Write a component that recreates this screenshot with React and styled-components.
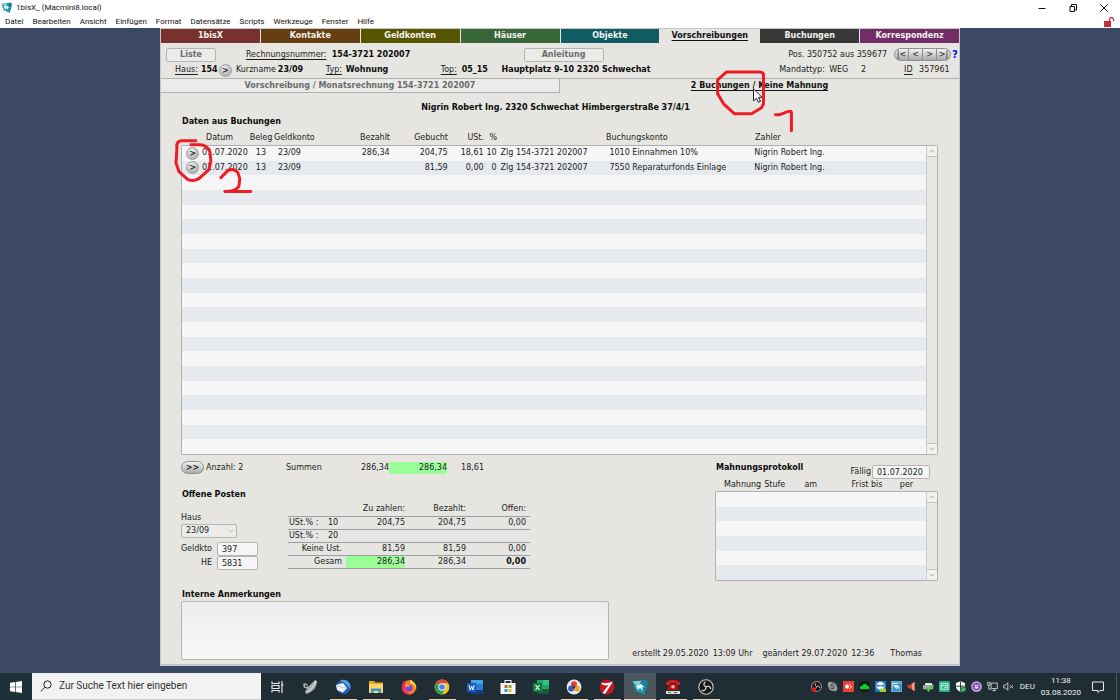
import React from "react";
import styled, { createGlobalStyle } from "styled-components";

const menuItems = [
  "Datei",
  "Bearbeiten",
  "Ansicht",
  "Einfügen",
  "Format",
  "Datensätze",
  "Scripts",
  "Werkzeuge",
  "Fenster",
  "Hilfe",
];

const modules = [
  { name: "1bisX", color: "#78312e" },
  { name: "Kontakte", color: "#653f12" },
  { name: "Geldkonten", color: "#575600" },
  { name: "Häuser", color: "#376638" },
  { name: "Objekte", color: "#115c63" },
  { name: "Vorschreibungen", active: true },
  { name: "Buchungen", color: "#373737" },
  { name: "Korrespondenz", color: "#722d66" },
];

const bookings = [
  {
    datum: "01.07.2020",
    beleg: "13",
    geldkonto: "23/09",
    bezahlt: "286,34",
    gebucht: "204,75",
    ust: "18,61",
    prozent: "10",
    text: "Zlg 154-3721 202007",
    konto: "1010 Einnahmen 10%",
    zahler: "Nigrin Robert Ing.",
  },
  {
    datum: "01.07.2020",
    beleg: "13",
    geldkonto: "23/09",
    bezahlt: "",
    gebucht: "81,59",
    ust: "0,00",
    prozent: "0",
    text: "Zlg 154-3721 202007",
    konto: "7550 Reparaturfonds Einlage",
    zahler: "Nigrin Robert Ing.",
  },
];

const openItems = [
  { label: "USt.% :", rate: "10", due: "204,75", paid: "204,75", open: "0,00" },
  { label: "USt.% :", rate: "20", due: "", paid: "", open: "" },
  { label: "Keine Ust.", due: "81,59", paid: "81,59", open: "0,00" },
  { label: "Gesam", due: "286,34", paid: "286,34", open: "0,00", total: true },
];

const BOOKING_ROWS = 21;
const REMINDER_ROWS = 6;

function AppLogo() {
  return (
    <svg viewBox="0 0 16 16" aria-hidden="true">
      <path d="M0.500 2.500 L15 1 L15.500 5 L12.500 15.500 L4 12 Z" fill="#1f9bb0" />
      <path d="M0.500 2.500 L9 1.700 L6 8 Z" fill="#7fd3dd" />
      <path d="M9 1.700 L15 1 L15.500 5 L12.500 15.500 L10 9 Z" fill="#1583a0" />
      <path d="M4 7 L9 5 L13 8.500 L10 8 L11 12 L8 9 L6 11 Z" fill="#e4f7fa" />
    </svg>
  );
}

function Obs({ live }) {
  return (
    <svg viewBox="0 0 16 16" aria-hidden="true">
      <circle cx="8" cy="8" r="7.2" fill="#151517" stroke="#c9c9c9" strokeWidth="1.1" />
      <path
        d="M8 8 C5.5 7 5.2 4 7.5 3 M8 8 C10.5 6 13 8 12.6 10.2 M8 8 C8.3 11 5.3 12.6 3.6 11"
        fill="none"
        stroke="#c9c9c9"
        strokeWidth="1.4"
      />
      {live && <circle cx="4" cy="12.5" r="3.4" fill="#e31818" />}
    </svg>
  );
}

const taskIcons = [
  {
    name: "Taskansicht",
    art: (
      <svg viewBox="0 0 16 16" fill="none" stroke="#e4e6e8" strokeWidth="1.2">
        <path d="M3 2.5v2h7v-2M3 13.5v-2h7v2M3 6.5h7v3H3zM13 2v12M12 6h2.5" />
      </svg>
    ),
  },
  {
    name: "Gimp",
    art: (
      <svg viewBox="0 0 16 16">
        <path d="M1 5 C4 3 6 5 6 8 L13 1 L15 2 C15 7 12 13 4 15 L3 12 C6 11 5 9 2 9 Z" fill="#a9adaf" />
        <path d="M5 13 C9 11 12 7 14 2" stroke="#e6e8e9" fill="none" />
        <circle cx="4" cy="7" r="1" fill="#20282d" />
      </svg>
    ),
  },
  {
    name: "Thunderbird",
    open: true,
    art: (
      <svg viewBox="0 0 16 16">
        <circle cx="8.5" cy="8" r="7.2" fill="#1e5fb4" />
        <path d="M5 1.5 C11 -1 17 4 15 10 C13 7 10 3 5 1.5 Z" fill="#55a2e8" />
        <path d="M1 6 L8 4 L12 9 L8 13.5 L2 11 Z" fill="#f3f4f7" />
        <path d="M1 6 L7 8.5 L12 9" fill="none" stroke="#b8c2d1" />
      </svg>
    ),
  },
  {
    name: "Explorer",
    open: true,
    art: (
      <svg viewBox="0 0 16 16">
        <path d="M1 2h5l1.5 1.5H15V14H1z" fill="#e8a91c" />
        <path d="M1 5h14v9H1z" fill="#fbd463" />
        <path d="M3 14V9.5h10V14h-2.5v-2h-5v2z" fill="#3a95d6" />
      </svg>
    ),
  },
  {
    name: "Firefox",
    art: (
      <svg viewBox="0 0 16 16">
        <circle cx="8" cy="8.5" r="7.2" fill="#ff7a22" />
        <path d="M9 0.5 C14 3 16 7 15 11 C14 6 12 5 9 5 Z" fill="#ffd13a" />
        <path d="M1 6 L2.5 2 L5 4 C2 8 5 15 11 15 C4 17 0 11 1 6z" fill="#f0266d" />
        <circle cx="8" cy="9" r="3.4" fill="#7a42d8" />
        <path d="M3.5 6 C6 5 8 6 9.5 7 L6 8 z" fill="#ffb52c" />
      </svg>
    ),
  },
  {
    name: "Chrome",
    open: true,
    art: (
      <svg viewBox="0 0 16 16">
        <circle cx="8" cy="8" r="7.4" fill="#f7c525" />
        <path d="M8 8 L1.6 4.3 A7.4 7.4 0 0 1 14.4 4.3 L8 4.3 Z" fill="#dc4638" />
        <path d="M8 8 L1.6 4.3 A7.4 7.4 0 0 0 8 15.4 L11.2 9.8 Z" fill="#2f9f53" />
        <circle cx="8" cy="8" r="3.7" fill="#f5f5f5" />
        <circle cx="8" cy="8" r="2.8" fill="#4383e8" />
      </svg>
    ),
  },
  {
    name: "Word",
    art: (
      <svg viewBox="0 0 16 16">
        <path d="M4 1h12v14H4z" fill="#2b7cd3" />
        <path d="M4 1h12v4H4z" fill="#41a5ee" />
        <path d="M4 11h12v4H4z" fill="#123f83" />
        <path d="M0 4h9v9H0z" fill="#185abd" />
        <path d="M2 6l1.3 5L4.6 7l1.3 4 1.3-5" fill="none" stroke="#fff" />
      </svg>
    ),
  },
  {
    name: "Store",
    art: (
      <svg viewBox="0 0 16 16">
        <path d="M5 5V1.5h6V5" fill="none" stroke="#eee" strokeWidth="1.2" />
        <path d="M0.5 4h15v11h-15z" fill="#f5f5f5" />
        <path d="M4.5 6h3v3h-3z" fill="#e75429" />
        <path d="M8.5 6h3v3h-3z" fill="#74b52c" />
        <path d="M4.5 10h3v3h-3z" fill="#239ddd" />
        <path d="M8.5 10h3v3h-3z" fill="#f7b71e" />
      </svg>
    ),
  },
  {
    name: "Excel",
    art: (
      <svg viewBox="0 0 16 16">
        <path d="M4 1h12v14H4z" fill="#21a366" />
        <path d="M10 1h6v5h-6z" fill="#33c481" />
        <path d="M4 10h12v5H4z" fill="#185c37" />
        <path d="M0 4h9v9H0z" fill="#107c41" />
        <path d="M2.5 6l4 5M6.5 6l-4 5" stroke="#fff" strokeWidth="1.2" />
      </svg>
    ),
  },
  {
    name: "Fotos",
    open: true,
    art: (
      <svg viewBox="0 0 16 16">
        <circle cx="8" cy="8" r="7.4" fill="#e6e8ec" />
        <circle cx="8" cy="5.2" r="3" fill="#df3f33" />
        <circle cx="5.2" cy="9.4" r="3" fill="#3560b0" />
        <circle cx="10.8" cy="9.4" r="3" fill="#eba523" />
        <circle cx="8" cy="8" r="1.4" fill="#3b3b50" />
      </svg>
    ),
  },
  {
    name: "Bankprogramm",
    open: true,
    art: (
      <svg viewBox="0 0 16 16">
        <circle cx="8" cy="8" r="7.4" fill="#c4161c" />
        <path d="M2 3.500 C6 5 10 4 14 2.500 L6 15 L3.500 14 L9.500 6 C6 7 3 6 2 3.500z" fill="#fff" />
      </svg>
    ),
  },
  { name: "1bisX", current: true, art: <AppLogo /> },
  {
    name: "Telefon",
    open: true,
    art: (
      <svg viewBox="0 0 16 16">
        <path d="M1 4 C2 0 14 0 15 4 V6 H11 V4 H5 V6 H1z" fill="#df1919" />
        <path d="M5 5h6l3 6H2z" fill="#b80f0f" />
        <circle cx="8" cy="7.8" r="1.8" fill="#f2b7b0" />
        <path d="M1 12h14v3H1z" fill="#d9dbd8" />
        <path d="M3 13h3v1H3z" fill="#3f9a43" />
        <path d="M9 13h3v1H9z" fill="#666" />
      </svg>
    ),
  },
  { name: "OBS", open: true, art: <Obs /> },
];

const trayIcons = [
  { name: "OBS Aufnahme", art: <Obs live /> },
  {
    name: "Skype",
    art: (
      <svg viewBox="0 0 16 16">
        <circle cx="8" cy="8" r="6" fill="#969a9c" />
        <circle cx="5" cy="5" r="4" fill="#969a9c" />
        <circle cx="11" cy="11" r="4" fill="#969a9c" />
        <path d="M10.5 5.8 C9 4 5.5 4.6 6 6.6 C6.4 8.4 10.4 7.6 10.4 9.7 C10.3 11.6 6.7 11.6 5.4 9.9" fill="none" stroke="#2a3238" strokeWidth="1.4" />
      </svg>
    ),
  },
  {
    name: "AnyDesk",
    art: (
      <svg viewBox="0 0 16 16">
        <path d="M0 0h16v16H0z" fill="#ef4136" />
        <path d="M6 4.5L9.5 8 6 11.5 2.5 8z" fill="#fff" />
        <path d="M9 4.5L12.5 8 9 11.5" fill="none" stroke="#fff" strokeWidth="1.3" />
      </svg>
    ),
  },
  {
    name: "Cloud",
    art: (
      <svg viewBox="0 0 16 16">
        <circle cx="8" cy="8" r="8" fill="#0a150c" />
        <path d="M2 12 C0 8 3 6 5 7 C6 3 11 3 12 7 C15 7 16 10 14 12z" fill="#12cf2a" />
      </svg>
    ),
  },
  {
    name: "TeamViewer",
    art: (
      <svg viewBox="0 0 16 16">
        <path d="M0 0h16v16H0z" fill="#1b75d0" />
        <circle cx="8" cy="7" r="6" fill="#fff" />
        <path d="M2 7l3-2.5v1.7h6V4.5L14 7l-3 2.5V7.8H5v1.7z" fill="#1b75d0" />
        <path d="M7 11h9v5H7z" fill="#9bd22d" />
      </svg>
    ),
  },
  {
    name: "Netzwerkmonitor",
    art: (
      <svg viewBox="0 0 16 16">
        <path d="M0 0h16v16H0z" fill="#5ca9da" />
        <path d="M2 3h8v6H2z" fill="#cae6f6" />
        <path d="M4 5h10v8H4z" fill="none" stroke="#23699d" />
        <path d="M6 7l2 4 2-4 2 4" fill="none" stroke="#fff" />
      </svg>
    ),
  },
  {
    name: "Lautsprecher",
    art: (
      <svg viewBox="0 0 16 16">
        <path d="M1 5.5h4L11 1v14L5 10.5H1z" fill="#c4442b" />
        <path d="M7 4L11 1v14L7 12z" fill="#e99c83" />
      </svg>
    ),
  },
  {
    name: "Drucker",
    art: (
      <svg viewBox="0 0 16 16">
        <path d="M3 3h10v4H3z" fill="#eceeed" />
        <path d="M0 6h15v6H0z" fill="#a2aaa7" />
        <path d="M5 10l3 4 7-9" fill="none" stroke="#4fc33e" strokeWidth="2.5" />
      </svg>
    ),
  },
  {
    name: "Sicherung",
    art: (
      <svg viewBox="0 0 16 16">
        <rect width="16" height="16" rx="2" fill="#25b28b" />
        <path d="M3 4h10v8H3zM3 7h10M8 9.5h3" fill="none" stroke="#e9fbf5" strokeWidth="1.3" />
      </svg>
    ),
  },
  {
    name: "Sicherheit",
    art: (
      <svg viewBox="0 0 16 16">
        <path d="M8 0.5L14.5 3v5c0 4-3 6.5-6.5 7.5C4.5 14.5 1.5 12 1.5 8V3z" fill="#fff" />
        <path d="M8 1v14M2 7.5h12" stroke="#20282d" strokeWidth="1.3" />
        <circle cx="12" cy="12" r="4" fill="#199a43" />
        <path d="M10 12l1.5 1.5L14 10.5" fill="none" stroke="#fff" />
      </svg>
    ),
  },
  {
    name: "Viber",
    art: (
      <svg viewBox="0 0 16 16">
        <circle cx="8" cy="8" r="7.6" fill="#d9c6ea" />
        <circle cx="8" cy="8" r="5.8" fill="#8347b5" />
        <path d="M5 6h2v4h2V6h2M5 10h6" fill="none" stroke="#fff" strokeWidth="1.2" />
      </svg>
    ),
  },
  {
    name: "Netzwerk",
    art: (
      <svg viewBox="0 0 16 16" fill="none" stroke="#dfe2e4" strokeWidth="1.2">
        <path d="M6 3h9v8H6zM8 14h5M10.5 11v3M1 2h3.5v4H1zM2.7 6v6H6" />
      </svg>
    ),
  },
  {
    name: "Ton aus",
    art: (
      <svg viewBox="0 0 16 16" fill="none" stroke="#dfe2e4" strokeWidth="1.2">
        <path d="M1 6h2.5L7 2.5v11L3.5 10H1zM10 6l4.5 4.5M14.5 6L10 10.5" />
      </svg>
    ),
  },
];

function Scroll() {
  return (
    <ScrollBar>
      <ScrollArrow aria-label="Nach oben">
        <svg viewBox="0 0 10 10">
          <path d="M2 6.5L5 3.5 8 6.5" />
        </svg>
      </ScrollArrow>
      <ScrollArrow aria-label="Nach unten">
        <svg viewBox="0 0 10 10">
          <path d="M2 3.5L5 6.5 8 3.5" />
        </svg>
      </ScrollArrow>
    </ScrollBar>
  );
}

function BookingTable() {
  const rows = Array.from({ length: BOOKING_ROWS }, (_, i) => bookings[i]);
  return (
    <ListFrame>
      <Table>
        <thead>
          <BookingHead>
            <Th />
            <Th $indent>Datum</Th>
            <Th $align="center">Beleg</Th>
            <Th>Geldkonto</Th>
            <Th $align="right">Bezahlt</Th>
            <Th $align="right">Gebucht</Th>
            <Th $align="right">USt.</Th>
            <Th $align="right">%</Th>
            <Th />
            <Th>Buchungskonto</Th>
            <Th>Zahler</Th>
          </BookingHead>
        </thead>
        <StripedBody $rows={BOOKING_ROWS} $height={308}>
          {rows.map((b, i) => (
            <BookingRow key={i}>
              {b && (
                <>
                  <Td $indent>
                    <RoundButton aria-label="Buchung öffnen">&gt;</RoundButton>
                  </Td>
                  <Td>{b.datum}</Td>
                  <Td $align="center">{b.beleg}</Td>
                  <Td $indent>{b.geldkonto}</Td>
                  <Td $align="right">{b.bezahlt}</Td>
                  <Td $align="right">{b.gebucht}</Td>
                  <Td $align="right">{b.ust}</Td>
                  <Td $align="right">{b.prozent}</Td>
                  <Td $indent>{b.text}</Td>
                  <Td $indent>{b.konto}</Td>
                  <Td>{b.zahler}</Td>
                </>
              )}
            </BookingRow>
          ))}
        </StripedBody>
      </Table>
      <Scroll />
    </ListFrame>
  );
}

function OpenItems() {
  return (
    <OpenTable>
      <thead>
        <tr>
          <th />
          <th />
          <th>Zu zahlen:</th>
          <th>Bezahlt:</th>
          <th>Offen:</th>
        </tr>
      </thead>
      <tbody>
        {openItems.map((o, i) => (
          <tr key={i}>
            {o.rate ? (
              <>
                <LabelCell>{o.label}</LabelCell>
                <LabelCell>{o.rate}</LabelCell>
              </>
            ) : (
              <td colSpan={2}>{o.label}</td>
            )}
            <td>{o.total ? <Sum>{o.due}</Sum> : o.due}</td>
            <td>{o.paid}</td>
            <td>{o.total ? <b>{o.open}</b> : o.open}</td>
          </tr>
        ))}
      </tbody>
    </OpenTable>
  );
}

function Reminders() {
  return (
    <ReminderBox>
      <ReminderTop>
        <Heading>Mahnungsprotokoll</Heading>
        <DueField>
          <label htmlFor="faellig">Fällig</label>
          <Field id="faellig" defaultValue="01.07.2020" $width={58} />
        </DueField>
      </ReminderTop>
      <ListFrame>
        <Table>
          <thead>
            <ReminderHead>
              <Th>Mahnung</Th>
              <Th>Stufe</Th>
              <Th>am</Th>
              <Th>Frist bis</Th>
              <Th>per</Th>
            </ReminderHead>
          </thead>
          <StripedBody $rows={REMINDER_ROWS} $height={88}>
            {Array.from({ length: REMINDER_ROWS }, (_, i) => (
              <tr key={i}>
                <td />
              </tr>
            ))}
          </StripedBody>
        </Table>
        <Scroll />
      </ListFrame>
    </ReminderBox>
  );
}

function Annotations() {
  return (
    <Marks viewBox="0 0 800 638" aria-hidden="true">
      <g fill="none" stroke="#ee1c24" strokeWidth="3" strokeLinecap="round" strokeLinejoin="round">
        <path d="M599 43 H567 L558 51 V65 L564 75 L575 85 H592 L602 79 L604 75 V45 Q603 43 600 43" />
        <path d="M616 86 H620 L625 84 Q632 81 632 84 V102" />
        <path d="M35 112 H20 Q15 113 16 119 L15 134 L18 143 L27 151 Q33 153 38 150 L48 141 L50 132 L49 123 Q46 116 39 116 L30 116" />
        <path d="M60 149 L67 142 Q73 139 77 144 L79 150 L78 158 Q75 163 64 163 H90" />
      </g>
      <path d="M594 60 V72 L597 69.5 L599 73.5 L601 72.5 L599 68.5 H602.5 Z" fill="#fff" stroke="#222" strokeWidth="1" />
    </Marks>
  );
}

function App() {
  return (
    <>
      <GlobalStyle />
      <Desktop>
        <TitleBar>
          <Title>
            <Glyph $size={11}>
              <AppLogo />
            </Glyph>
            1bisX_ (Macmini8.local)
          </Title>
          <WindowButtons>
            <WindowButton aria-label="Minimieren">
              <svg viewBox="0 0 10 10">
                <path d="M1.5 5.5h7" />
              </svg>
            </WindowButton>
            <WindowButton aria-label="Wiederherstellen">
              <svg viewBox="0 0 10 10">
                <path d="M2 3.5h4.5V8.5H2zM3.5 3.5v-2h5v5.5h-2" />
              </svg>
            </WindowButton>
            <WindowButton aria-label="Schließen">
              <svg viewBox="0 0 10 10">
                <path d="M1.5 1.5l7 7M8.5 1.5l-7 7" />
              </svg>
            </WindowButton>
          </WindowButtons>
        </TitleBar>
        <MenuBar>
          {menuItems.map((m) => (
            <MenuItem key={m}>{m}</MenuItem>
          ))}
          <Lock viewBox="0 0 12 12">
            <path d="M1 5h7v6H1z" fill="#c62f43" />
            <path d="M6.5 5V3Q8.5 0 10.5 3v2" fill="none" stroke="#c62f43" strokeWidth="1.3" />
          </Lock>
        </MenuBar>

        <Workspace>
          <Form>
            <Tabs>
              {modules.map((m) => (
                <Tab key={m.name} href="#" $color={m.color} $active={m.active}>
                  {m.name}
                </Tab>
              ))}
            </Tabs>

            <Header>
              <HeaderRow $cols="80fr 86fr 192fr 80fr 185fr 106fr 57fr 8fr">
                <BoxButton>Liste</BoxButton>
                <u>Rechnungsnummer:</u>
                <b>154-3721 202007</b>
                <BoxButton $wide>Anleitung</BoxButton>
                <span />
                <span>Pos. 350752 aus 359677</span>
                <Pager>
                  <PagerButton>|&lt;</PagerButton>
                  <PagerButton>&lt;</PagerButton>
                  <PagerButton>&gt;</PagerButton>
                  <PagerButton>&gt;|</PagerButton>
                </Pager>
                <Help href="#">?</Help>
              </HeaderRow>
              <HeaderRow $inset $cols="26fr 18fr 17fr 42fr 48fr 20fr 95fr 21fr 40fr 278fr 50fr 32fr 43fr 15fr 40fr">
                <u>Haus:</u>
                <b>154</b>
                <RoundButton aria-label="Haus öffnen">&gt;</RoundButton>
                <span>Kurzname</span>
                <b>23/09</b>
                <u>Typ:</u>
                <b>Wohnung</b>
                <u>Top:</u>
                <b>05_15</b>
                <b>Hauptplatz 9-10 2320 Schwechat</b>
                <span>Mandattyp:</span>
                <span>WEG</span>
                <span>2</span>
                <u>ID</u>
                <span>357961</span>
              </HeaderRow>
            </Header>

            <Panels>
              <PanelTab href="#">Vorschreibung / Monatsrechnung 154-3721 202007</PanelTab>
              <PanelTab href="#" $active>
                2 Buchungen / Keine Mahnung
              </PanelTab>
            </Panels>

            <Content>
              <Address>Nigrin Robert Ing. 2320 Schwechat Himbergerstraße 37/4/1</Address>
              <Heading>Daten aus Buchungen</Heading>
              <BookingTable />

              <Lower>
                <div>
                  <Totals>
                    <PillButton>&gt;&gt;</PillButton>
                    <span>Anzahl: 2</span>
                    <span>Summen</span>
                    <Amount>286,34</Amount>
                    <Sum>286,34</Sum>
                    <Amount>18,61</Amount>
                  </Totals>
                  <Heading>Offene Posten</Heading>
                  <OpenGrid>
                    <Account>
                      <label htmlFor="haus">Haus</label>
                      <SelectWrap>
                        <Select id="haus" defaultValue="23/09">
                          <option>23/09</option>
                        </Select>
                        <svg viewBox="0 0 10 10">
                          <path d="M2 3.5L5 6.5 8 3.5" />
                        </svg>
                      </SelectWrap>
                      <AccountRow>
                        <label htmlFor="geldkto">Geldkto</label>
                        <Field id="geldkto" defaultValue="397" $width={41} />
                      </AccountRow>
                      <AccountRow>
                        <label htmlFor="he">HE</label>
                        <Field id="he" defaultValue="5831" $width={41} />
                      </AccountRow>
                    </Account>
                    <OpenItems />
                  </OpenGrid>
                </div>
                <Reminders />
              </Lower>

              <Bottom>
                <NotesBlock>
                  <Heading as="label" htmlFor="notes">
                    Interne Anmerkungen
                  </Heading>
                  <Notes id="notes" />
                </NotesBlock>
                <Stamp>
                  <span>erstellt 29.05.2020</span>
                  <span>13:09 Uhr</span>
                  <span>geändert 29.07.2020</span>
                  <span>12:36</span>
                  <span>Thomas</span>
                </Stamp>
              </Bottom>
            </Content>
            <Annotations />
          </Form>
        </Workspace>

        <Taskbar>
          <Start aria-label="Start">
            <svg viewBox="0 0 12 12">
              <path d="M0 1.7L5 1v4.7H0zM5.7 0.9L12 0v5.7H5.7zM0 6.3h5V11l-5-.7zM5.7 6.3H12V12l-6.3-.9z" fill="#fff" />
            </svg>
          </Start>
          <Search>
            <svg viewBox="0 0 12 12">
              <circle cx="7.5" cy="4.5" r="3.7" />
              <path d="M5 7.2L0.8 11.4" />
            </svg>
            <input aria-label="Suche" placeholder="Zur Suche Text hier eingeben" />
          </Search>
          <Tasks>
            {taskIcons.map((t) => (
              <Task key={t.name} aria-label={t.name} $open={t.open} $current={t.current}>
                <Glyph $size={16}>{t.art}</Glyph>
              </Task>
            ))}
          </Tasks>
          <Tray>
            {trayIcons.map((t) => (
              <Glyph key={t.name} $size={11}>
                {t.art}
              </Glyph>
            ))}
          </Tray>
          <Language>DEU</Language>
          <Clock>
            <span>11:38</span>
            <span>03.08.2020</span>
          </Clock>
          <Notice aria-label="Benachrichtigungen">
            <svg viewBox="0 0 12 12">
              <path d="M0.5 1h11v8.5H8L6 11.5V9.5H0.5z" />
            </svg>
          </Notice>
        </Taskbar>
      </Desktop>
    </>
  );
}

const GlobalStyle = createGlobalStyle`
  * {
    box-sizing: border-box;
  }

  body {
    margin: 0;
  }

  button, input, select, textarea {
    margin: 0;
    font: inherit;
    color: inherit;
  }

  svg {
    display: block;
  }
`;

const Desktop = styled.div`
  display: flex;
  flex-direction: column;
  min-height: 100vh;
  background: #3c4963;
  font-family: "Roboto", "Open Sans", sans-serif;
  font-size: 8px;
  line-height: 12px;
  color: #111;
`;

const TitleBar = styled.div`
  display: flex;
  justify-content: space-between;
  align-items: center;
  height: 15px;
  padding: 0 11px 0 1px;
  background: #fff;
`;

const Title = styled.div`
  display: flex;
  align-items: center;
  gap: 4px;
`;

const Glyph = styled.span`
  flex: none;
  width: ${(p) => p.$size}px;

  svg {
    width: 100%;
  }
`;

const WindowButtons = styled.div`
  display: flex;
  gap: 21px;
`;

const WindowButton = styled.button`
  width: 10px;
  height: 10px;
  padding: 0;
  border: 0;
  background: none;

  svg {
    fill: none;
    stroke: #111;
  }
`;

const MenuBar = styled.div`
  display: flex;
  align-items: center;
  gap: 9px;
  height: 13px;
  padding: 0 5px;
  background: #fff;
`;

const MenuItem = styled.button`
  padding: 0;
  border: 0;
  background: none;
`;

const Lock = styled.svg`
  width: 12px;
  margin-left: auto;
`;

const Workspace = styled.main`
  flex: 1;
  padding-bottom: 7px;
`;

const Form = styled.section`
  position: relative;
  width: 100%;
  max-width: 800px;
  margin: 0 auto;
  border: solid #c4c6cb;
  border-width: 1px 1px 2px;
  background: #e6e5e1;
  font-family: "DejaVu Sans", sans-serif;
  color: #1c1c1c;

  b {
    color: #0c0c0c;
  }

  u {
    text-underline-offset: 2px;
  }
`;

const Tabs = styled.nav`
  display: grid;
  grid-template-columns: repeat(8, 1fr);
  gap: 1px;
`;

const Tab = styled.a`
  height: 14px;
  line-height: 14px;
  text-align: center;
  font-weight: bold;
  color: ${(p) => (p.$active ? "#111" : "#f4f2ee")};
  background: ${(p) => p.$color || "transparent"};
  text-decoration: ${(p) => (p.$active ? "underline" : "none")};
  text-underline-offset: 2px;
`;

const Header = styled.div`
  padding: 4px 0 0 5px;
`;

const HeaderRow = styled.div`
  display: grid;
  grid-template-columns: ${(p) => p.$cols.replace(/(\d+fr)/g, "minmax(0, $1)")};
  align-items: center;
  height: ${(p) => (p.$inset ? 16 : 15)}px;
  padding-left: ${(p) => (p.$inset ? 9 : 0)}px;
  white-space: nowrap;
`;

const BoxButton = styled.button`
  width: ${(p) => (p.$wide ? 80 : 50)}px;
  height: 14px;
  padding: 0;
  border: 1px solid #b4b4b2;
  border-radius: 2px;
  background: #ebebea;
  font-weight: bold;
  line-height: 12px;
  color: #6c6c6c;
`;

const Pager = styled.div`
  display: flex;
  height: 13px;
  border: 1px solid #8f8f8f;
  border-radius: 7px;
  overflow: hidden;
  background: linear-gradient(#f2f2f2, #a9a9a9);
`;

const PagerButton = styled.button`
  flex: 1;
  padding: 0;
  border: 0;
  background: none;
  line-height: 11px;

  & + & {
    border-left: 1px solid #8f8f8f;
  }
`;

const Help = styled.a`
  padding-left: 1px;
  font-size: 10px;
  font-weight: bold;
  color: #0a0ae0;
  text-decoration: none;
`;

const RoundButton = styled.button`
  width: 13px;
  height: 13px;
  padding: 0;
  border: 1px solid #a0a0a0;
  border-radius: 50%;
  background: radial-gradient(circle at 40% 30%, #f0f0f0, #9c9c9c);
  font-weight: bold;
  line-height: 11px;
`;

const Panels = styled.nav`
  display: grid;
  grid-template-columns: 1fr 1fr;
`;

const PanelTab = styled.a`
  height: 15px;
  border: solid #b0b0ae;
  border-width: ${(p) => (p.$active ? "1px 0 0" : "1px 1px 1px 0")};
  background: ${(p) => (p.$active ? "transparent" : "#ebebea")};
  text-align: center;
  font-weight: bold;
  line-height: 13px;
  color: ${(p) => (p.$active ? "#111" : "#6c6c6c")};
  text-decoration: ${(p) => (p.$active ? "underline" : "none")};
  text-underline-offset: 2px;
`;

const Content = styled.div`
  padding: 9px 21px 4px 20px;
`;

const Address = styled.p`
  margin: 0 0 2px;
  padding-right: 8px;
  text-align: center;
  font-weight: bold;
  color: #0c0c0c;
`;

const Heading = styled.h2`
  display: block;
  margin: 0;
  padding-left: 1px;
  font-size: 8px;
  font-weight: bold;
  line-height: 12px;
  color: #0c0c0c;
`;

const ListFrame = styled.div`
  display: grid;
  grid-template-columns: minmax(0, 1fr) 12px;
`;

const Table = styled.table`
  display: contents;

  thead {
    display: block;
    grid-column: 1 / -1;
  }
`;

const BookingRow = styled.tr`
  display: grid;
  grid-template-columns: 20fr 46fr 26fr 56fr 60fr 58fr 36fr 13fr 109fr 149fr 172fr;
  align-items: center;
  white-space: nowrap;
`;

const BookingHead = styled(BookingRow)`
  height: 16px;
  margin-top: 1px;
  padding: 2px 11px 0 1px;
`;

const Th = styled.th`
  min-width: 0;
  padding: 0 0 0 ${(p) => (p.$indent ? 4 : 0)}px;
  font-weight: normal;
  text-align: ${(p) => p.$align || "left"};
`;

const Td = styled.td`
  min-width: 0;
  padding: 0 0 0 ${(p) => (p.$indent ? 4 : 0)}px;
  text-align: ${(p) => p.$align || "left"};

  button {
    display: block;
  }
`;

const StripedBody = styled.tbody`
  display: grid;
  grid-template-rows: repeat(${(p) => p.$rows}, minmax(0, 1fr));
  height: ${(p) => p.$height + 2}px;
  border: 1px solid #b0b0b0;
  border-right: 0;
  border-radius: 2px 0 0 2px;

  tr {
    background: #f6f6f6;
  }

  tr:nth-child(even) {
    background: #e6eaef;
  }
`;

const ScrollBar = styled.div`
  display: flex;
  flex-direction: column;
  justify-content: space-between;
  border: 1px solid #b0b0b0;
  border-left-color: #ccc;
  border-radius: 0 2px 2px 0;
  background: #e8e7e4;
`;

const ScrollArrow = styled.button`
  height: 11px;
  padding: 0;
  border: 0;
  background: #f2f2f1;
  border-bottom: 1px solid #c4c4c4;

  &:last-child {
    border-bottom: 0;
    border-top: 1px solid #c4c4c4;
  }

  svg {
    width: 8px;
    margin: 0 auto;
    fill: none;
    stroke: #999;
  }
`;

const Lower = styled.div`
  display: grid;
  grid-template-columns: minmax(0, 1fr) 223px;
  padding-top: 5px;
`;

const Totals = styled.div`
  display: grid;
  grid-template-columns: 25px 80px 43px 60px 58px 37px;
  align-items: center;
  height: 15px;
  margin-bottom: 14px;
  white-space: nowrap;
`;

const PillButton = styled.button`
  width: 23px;
  height: 13px;
  padding: 0;
  border: 1px solid #909090;
  border-radius: 7px;
  background: linear-gradient(#f2f2f2, #a9a9a9);
  font-weight: bold;
  line-height: 11px;
`;

const Amount = styled.span`
  text-align: right;
`;

const Sum = styled.span`
  display: block;
  border-radius: 2px;
  background: #9bfd98;
  text-align: right;
`;

const OpenGrid = styled.div`
  display: grid;
  grid-template-columns: 77px 242px;
  gap: 30px;
  align-items: start;
`;

const Account = styled.div`
  display: flex;
  flex-direction: column;
  padding-top: 11px;
`;

const SelectWrap = styled.div`
  position: relative;
  width: 56px;
  margin-bottom: 4px;

  svg {
    position: absolute;
    top: 3px;
    right: 2px;
    width: 8px;
    fill: none;
    stroke: #aaa;
    pointer-events: none;
  }
`;

const Select = styled.select`
  display: block;
  appearance: none;
  width: 100%;
  height: 14px;
  padding: 0 4px;
  border: 1px solid #b4b4b2;
  border-radius: 2px;
  background: #ebebea;
`;

const AccountRow = styled.div`
  display: flex;
  justify-content: flex-end;
  align-items: center;
  gap: 5px;
`;

const Field = styled.input`
  width: ${(p) => p.$width}px;
  height: 14px;
  padding: 0 4px;
  border: 1px solid #b4b4b2;
  border-radius: 2px;
  background: #f5f5f5;
`;

const OpenTable = styled.table`
  margin-top: 2px;
  table-layout: fixed;
  border-collapse: collapse;

  th,
  td {
    height: 13px;
    padding: 0;
    text-align: right;
    font-weight: normal;
    line-height: 12px;
    border-bottom: 1px solid #9a9ca6;
    white-space: nowrap;
  }

  td:nth-last-child(1),
  th:nth-last-child(1) {
    padding-right: 4px;
  }

  th:nth-child(1) {
    width: 39px;
  }

  th:nth-child(2) {
    width: 19px;
  }

  th:nth-child(3) {
    width: 59px;
  }

  th:nth-child(4) {
    width: 61px;
  }

  td[colspan] {
    padding-right: 4px;
  }
`;

const LabelCell = styled.td`
  &&& {
    padding-left: 1px;
    text-align: left;
  }
`;

const ReminderBox = styled.div`
  padding-top: 2px;
`;

const ReminderTop = styled.div`
  display: flex;
  justify-content: space-between;
  padding-right: 8px;
`;

const DueField = styled.div`
  display: flex;
  align-items: center;
  gap: 1px;
  padding-top: 3px;
`;

const ReminderHead = styled.tr`
  display: grid;
  grid-template-columns: 40fr 40fr 47fr 48fr 38fr;
  height: 12px;
  padding-left: 9px;
  white-space: nowrap;
`;

const Bottom = styled.div`
  display: flex;
  justify-content: space-between;
  align-items: flex-end;
  margin-top: 8px;
`;

const NotesBlock = styled.div`
  flex: 0 1 428px;
`;

const Notes = styled.textarea`
  display: block;
  width: 100%;
  height: 59px;
  border: 1px solid #b4b4b2;
  border-radius: 2px;
  background: linear-gradient(#ededed, #f7f7f7);
  resize: none;
`;

const Stamp = styled.div`
  display: flex;
  gap: 4px;
  padding-right: 16px;
  white-space: nowrap;

  span:nth-child(3) {
    margin-left: 6px;
  }

  span:last-child {
    margin-left: 12px;
  }
`;

const Marks = styled.svg`
  position: absolute;
  top: 0;
  left: 0;
  width: 100%;
  pointer-events: none;
`;

const Taskbar = styled.footer`
  display: flex;
  align-items: stretch;
  height: 27px;
  background: #212d35;
  color: #f0f0f0;
`;

const Start = styled.button`
  width: 32px;
  padding: 0 10px;
  border: 0;
  background: #1e3139;
`;

const Search = styled.label`
  display: flex;
  align-items: center;
  gap: 7px;
  flex: 0 1 229px;
  padding-left: 8px;
  border-bottom: 1px solid #ccc;
  background: #f2f2f2;
  color: #333;

  svg {
    flex: none;
    width: 12px;
    fill: none;
    stroke: #222;
  }

  input {
    flex: 1;
    min-width: 0;
    padding: 0;
    border: 0;
    outline: 0;
    background: none;
    font-size: 10px;
  }

  input::placeholder {
    color: #333;
    opacity: 1;
  }
`;

const Tasks = styled.div`
  display: flex;
  gap: 1px;
`;

const Task = styled.button`
  display: flex;
  justify-content: center;
  align-items: center;
  width: 32px;
  padding: 0;
  border: 0;
  background: ${(p) =>
    p.$open
      ? "linear-gradient(#f3d3ab, #f3d3ab) center bottom / 27px 1px no-repeat"
      : p.$current
        ? "linear-gradient(#f3d3ab, #f3d3ab) center bottom / 100% 1px no-repeat #4c565d"
        : "none"};
`;

const Tray = styled.div`
  display: flex;
  align-items: center;
  gap: 5px;
  margin-left: auto;
`;

const Language = styled.span`
  align-self: center;
  margin: 0 6px;
`;

const Clock = styled.div`
  display: flex;
  flex-direction: column;
  justify-content: center;
  align-items: center;
`;

const Notice = styled.button`
  width: 36px;
  margin-right: 3px;
  padding: 0 13px 0 11px;
  border: 0;
  border-right: 1px solid #4c565d;
  background: none;

  svg {
    width: 12px;
    fill: none;
    stroke: #e8e8e8;
  }
`;

export default App;
